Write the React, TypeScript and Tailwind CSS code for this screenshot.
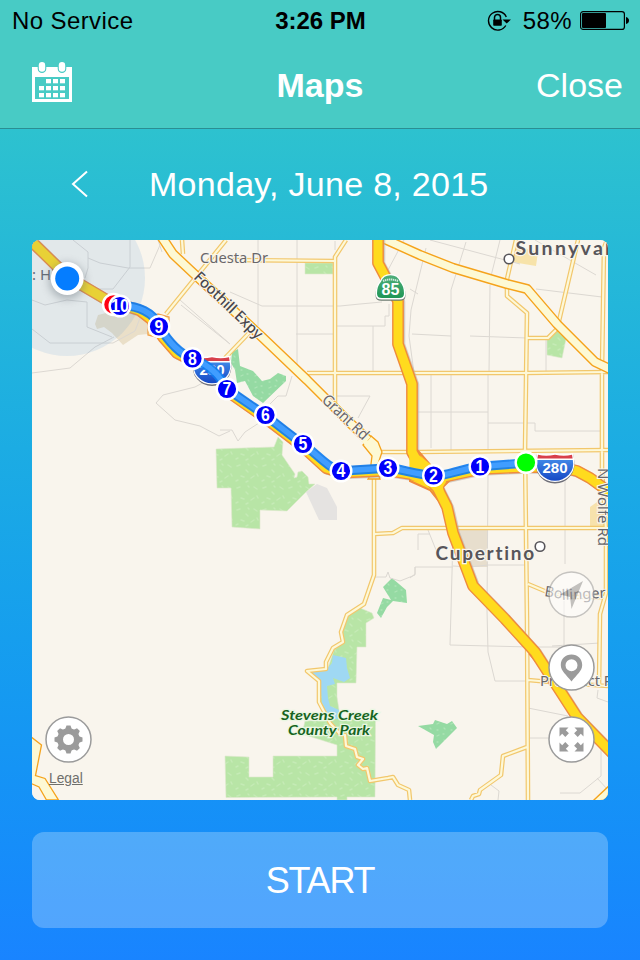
import type { ReactNode } from "react";

// All map geometry shares one coordinate space, see the viewBox in <RouteMap />.
const STREETS = [
  "M258 240V326 M297 240V371 M335 241V250 M230 292L262 306L340 306L360 304L382 302",
  "M296 334H335 M337 326H385V316H389V304 M373 326V374 M404 240L388 270 M411 310L409 336L414 373",
  "M426 248L411 310 M410 289L418 294 M500 240L490 280 M430 240L520 264 M466 242L451 290V373",
  "M490 285L489 373 M412 334L451 336 M470 336L527 338 M546 340V373 M536 289L602 297",
  "M535 240L596 275 M431 375V448 M451 375V450 M418 412H488 M488 375V450 M488 423H535V431H602",
  "M565 473V564 M488 475L487 610L488 652L495 681H527 M451 500V525",
  "M453 536L451 610L450 645L530 647H565",
  "M418 550V534 M410 578L415 574V567H453 M564 600V645 M552 646L600 643 M528 708L568 716",
  "M530 738H552 M601 740V776L580 793H560 M597 778L608 790 M598 690L597 698L608 702",
  "M415 567V575L400 581L390 578L388 572L386 577H375 M180 300L230 344 M491 785L499 791L498 800",
  "M453 566L470 567L488 565H525 M428 530L440 560 M418 534H430",
  "M32 329L50 343H113L135 331L140 318 M32 300L45 305L67 300L87 302V327L112 337",
  "M32 373L70 368L95 347L114 337 M130 240V267L113 289H87 M73 240L88 252V268 M88 258L100 263L128 268H150L160 245",
  "M88 268L85 278 M225 371L195 387L163 395L156 403L175 420L200 426L219 436L230 431",
  "M220 430L232 430L238 441L245 432L262 421 M292 376L286 396H278L270 404 M330 396H370L358 418 M158 240L162 252",
  "M181 305L230 344",
];

const LOCAL_ROADS = [
  "M226 240L166 314 M182 240L183 254 M232 260L335 261",
  "M346 240L335 257V403 M307 373H525L608 372 M249 333L225 358",
  "M516 240L507 279V296L527 313L525 450L527 620L528 800",
  "M578 240L559 321L557 329L548 338H527 M607 240L604 248L602 369V470L606 530V593L600 614L599 686",
  "M380 452H412 M418 452L608 450 M375 534L393 533L402 528H608",
  "M528 584L547 592L570 597H605 M528 680L550 682L608 686",
  "M374 474V575L364 604L347 615L341 632L343 642L333 648L326 662L326 669L307 671L319 681V702L330 723L340 734L345 735L346 746L355 749L357 757L363 759L358 765L363 769L367 768L370 781L388 778L393 777L398 785L409 790L410 800",
  "M527 747L503 756L501 775L480 790L479 794L473 796L471 800",
];

const EXPRESSWAYS = [
  "M161 236L173 254L190 270L220 298L263 338L307 380L330 403L347 420L368 440",
  "M380 237L420 255L453 268L507 284L527 289L557 324L595 362L612 370",
  "M594 806L612 789",
];

const FREEWAYS = [
  "M28 238L68 277L107 300L140 310.500L151 319L163 337L177 353L193 361L218 373L227 391L264 417L302 446L326 468L341 472.500L388 470.500L410 474L434 479L480 469L525 467H560L577 471L590 478L612 494",
  "M378 236V263L387 280L398 301V344L412 384V452L425 475L437 487L447 507L453 533L473 586L505 619L535 652L577 717L614 755",
];

const PARKS = [
  "M305 263H333V274H305Z",
  "M547 336L557 331L566 339L562 358L547 355Z",
  "M216 449L274 447L278 437L283 442L282 455L295 474L294 478L297 477L298 472L302 471L308 477L309 484L315 484L306 492L287 511L260 510V529L232 527L231 488H217Z",
  "M360 608L372 613L374 618L366 623V647H357L356 683H337V697L339 710V719H375.500L375 797H347V800H337V797L226 797.500L225 756L249 757V777H273V756H337V745L302 734L305 721L328 720L320 700V680L328 668L334 650L344 642L342 630L348 616Z",
];

const GOLF = [
  "M232 352L238 349L240 366L253 371L262 381L270 379L278 373L286 376V381L263 403L253 396L245 381L237 383L235 370L231 363Z",
  "M392 578L406 590L407 603L393 601L387 607L381 618L377 613L383 598L391 600L383 587Z",
  "M418 726L433 724L435 720L447 724L452 721L457 728L436 749L433 742L434 735Z",
];

const ROUTE =
  "M526 463L480 466.500C455 470 450 476 434 475.500C415 475 400 468 388 468L341 471C328 468 318 455 303 444C290 435 278 425 265 415L227 389C220 376 211 366 192 358C180 354 168 341 159 326C154 313 138 305 120 306";

const MILES = [
  { n: 10, x: 120, y: 306 },
  { n: 9, x: 159, y: 326.5 },
  { n: 8, x: 192.5, y: 358.5 },
  { n: 7, x: 227, y: 389 },
  { n: 6, x: 265.5, y: 415 },
  { n: 5, x: 303, y: 444 },
  { n: 4, x: 341, y: 471 },
  { n: 3, x: 388, y: 468 },
  { n: 2, x: 433.5, y: 475.5 },
  { n: 1, x: 480, y: 466.5 },
];

export default function App() {
  return (
    <div className="w-[640px] h-[960px] overflow-hidden flex flex-col bg-gradient-to-b from-[#35cac6] to-[#1984ff] font-['Liberation_Sans',Arial,sans-serif] text-white">
      <header className="h-[129px] shrink-0 bg-[#48cbc5] border-b border-[#2b8e93]">
        <StatusBar />
        <div className="grid grid-cols-3 items-center h-[86px] pl-8 pr-[17px]">
          <CalendarIcon />
          <h1 className="text-center text-[34px] font-bold leading-none -ml-[15px]">Maps</h1>
          <button className="text-right text-[34px] leading-none">Close</button>
        </div>
      </header>

      <div className="h-[109px] mb-0.5 shrink-0 flex items-center pl-[71px]">
        <svg width="17" height="28" viewBox="0 0 17 28" fill="none" stroke="white" strokeWidth="2">
          <path d="M16 1.500L2 14L16 26.500" />
        </svg>
        <p className="ml-[61px] text-[34px] leading-none tracking-[0.28px] whitespace-nowrap">Monday, June 8, 2015</p>
      </div>

      <main className="relative mx-8 h-[560px] shrink-0 rounded-lg overflow-hidden bg-[#f9f5ed]">
        <RouteMap />
        <RoundButton className="left-[12.5px] top-[476px]">
          <GearIcon />
        </RoundButton>
        <RoundButton className="right-[13px] top-[331px] opacity-55">
          <path d="M35 10L23.500 38L22 26L12 23.500Z" fill="#969696" />
        </RoundButton>
        <RoundButton className="right-[13px] top-[403.5px]">
          <path
            d="M23.500 10.500c-6.200 0-10.700 4.600-10.700 10.400 0 6 5.500 9.600 10.700 16.600 5.200-7 10.700-10.600 10.700-16.600 0-5.800-4.500-10.400-10.700-10.400zm0 4.700a6 6 0 1 1 0 12 6 6 0 0 1 0-12z"
            fill="#9b9b9b"
            fillRule="evenodd"
          />
        </RoundButton>
        <RoundButton className="right-[13px] top-[476px]">
          <ExpandIcon />
        </RoundButton>
        <a className="absolute left-[17px] top-[531px] text-[13.800px] leading-4 text-[#6f6f6c] underline">Legal</a>
      </main>

      <button className="mx-8 mt-8 h-24 pt-0.5 rounded-xl bg-white/25 text-[36px] leading-none">
        <span className="tracking-[-1.2px]">START</span>
      </button>
    </div>
  );
}

function StatusBar() {
  return (
    <div className="grid grid-cols-3 items-center h-[42px] pl-3 pr-[11px] text-black text-[24px] leading-none">
      <span className="tracking-[0.4px] whitespace-nowrap">No Service</span>
      <span className="text-center font-bold text-[24px]">3:26 PM</span>
      <div className="flex items-center justify-end">
        <svg width="24" height="22" viewBox="0 0 24 22" fill="none" stroke="black" className="-mt-px">
          <path d="M18.800 15.500A9.300 9.300 0 1 1 19.300 7" strokeWidth="1.400" />
          <path d="M15.500 9.500H24L19.700 13.500Z" fill="black" stroke="none" />
          <path d="M7.500 10V7.500a3 3 0 0 1 6 0V10" strokeWidth="1.500" />
          <rect x="6.200" y="9.500" width="8.600" height="6.200" rx="0.800" fill="black" stroke="none" />
        </svg>
        <span className="ml-[12px] tracking-[0.4px]">58%</span>
        <svg className="ml-2 -mt-0.5" width="49" height="20" viewBox="0 0 49 20">
          <rect x="0.600" y="1.600" width="43.800" height="17.800" rx="2.500" fill="none" stroke="black" strokeWidth="1.200" />
          <rect x="2" y="3" width="24" height="15" rx="1" />
          <path d="M46 7q3 1 3 3.500t-3 3.500z" />
        </svg>
      </div>
    </div>
  );
}

function CalendarIcon() {
  const cells = [
    [14, 17], [21, 17], [28, 17],
    [7, 24], [14, 24], [21, 24], [28, 24],
    [7, 31], [14, 31], [21, 31], [28, 31],
  ];
  return (
    <svg className="-mt-1.5" width="40" height="40" viewBox="0 0 40 40">
      <path d="M0 5H40V40H0ZM3 15V37H37V15Z" fill="white" fillRule="evenodd" />
      {[10, 30].map((x) => (
        <g key={x}>
          <rect x={x - 4.300} y="-1" width="8.600" height="12" rx="4.300" fill="#48cbc5" />
          <rect x={x - 3.200} y="0" width="6.400" height="9.800" rx="3.200" fill="white" />
        </g>
      ))}
      {cells.map(([x, y]) => (
        <rect key={`${x}-${y}`} x={x} y={y} width="5" height="4.300" fill="white" />
      ))}
    </svg>
  );
}

function RoundButton({ className, children }: { className: string; children: ReactNode }) {
  return (
    <button className={`absolute ${className}`}>
      <svg width="47" height="47" viewBox="0 0 47 47" className="block">
        <circle cx="23.500" cy="23.500" r="22.500" fill="white" stroke="#9b9b9b" strokeWidth="1.500" />
        {children}
      </svg>
    </button>
  );
}

function GearIcon() {
  return (
    <g transform="translate(23.500 23.500)">
      {[0, 45, 90, 135, 180, 225, 270, 315].map((a) => (
        <path key={a} d="M-3.800-9L-2-14H2L3.800-9Z" fill="#9b9b9b" transform={`rotate(${a})`} />
      ))}
      <circle r="8.400" fill="none" stroke="#9b9b9b" strokeWidth="5.800" />
    </g>
  );
}

function ExpandIcon() {
  return (
    <g transform="translate(23.500 23.500)" fill="#9b9b9b">
      {[0, 90, 180, 270].map((a) => (
        <path key={a} d="M-12-12H-3L-5.700-9.300L-2.600-6.200L-6.200-2.600L-9.300-5.700L-12-3Z" transform={`rotate(${a})`} />
      ))}
    </g>
  );
}

function Roads({ lines, casing, fill, outer, inner }: {
  lines: string[]; casing: string; fill: string; outer: number; inner: number;
}) {
  const d = lines.join(" ");
  return (
    <g fill="none" strokeLinejoin="round">
      <path d={d} stroke={casing} strokeWidth={outer} />
      <path d={d} stroke={fill} strokeWidth={inner} />
    </g>
  );
}

function RouteMap() {
  return (
    <svg className="block" width="576" height="560" viewBox="32 240 576 560">
      <defs>
        <pattern id="grass" width="26" height="22" patternUnits="userSpaceOnUse">
          <rect width="26" height="22" fill="#b8e5a6" />
          <path d="M3 4l3-1M12 8l2 2M20 3l3 2M7 14l3 1M17 16l3-2M23 12l1 2M2 19l2-1M12 20l2-1M14 2l1 1" stroke="#c5ebb6" strokeWidth="1.500" strokeLinecap="round" />
        </pattern>
        <pattern id="golf" width="14" height="12" patternUnits="userSpaceOnUse">
          <rect width="14" height="12" fill="#95daa3" />
          <path d="M3 4l2-1M10 8l1 1M9 2h1M3 10h1" stroke="#ade4b6" strokeWidth="1.300" strokeLinecap="round" />
        </pattern>
        <linearGradient id="interstate" x1="0" y1="0" x2="0" y2="1">
          <stop offset="0" stopColor="#3f86e6" />
          <stop offset="1" stopColor="#1447c4" />
        </linearGradient>
        <linearGradient id="stateRoute" x1="0" y1="0" x2="0" y2="1">
          <stop offset="0" stopColor="#4fae7a" />
          <stop offset="1" stopColor="#1f9656" />
        </linearGradient>
        <filter id="soft" x="-50%" y="-50%" width="200%" height="200%">
          <feGaussianBlur stdDeviation="4" />
        </filter>
      </defs>

      <rect x="32" y="240" width="576" height="560" fill="#f9f5ed" />

      {/* land use */}
      <path d="M98 315L95 324L97 329L104 327L112 333L123 345L138 335L148 334L148 322L140 317L118 310Z" fill="#eadfc8" />
      <path d="M517 246L538 252L536 266L512 262Z" fill="#f7e3aa" />
      <path d="M458 529H488V567H464Z" fill="#e7decd" />
      <path d="M590 507L597 502H604V527H590Z" fill="#f7e2ac" />
      <path d="M306 492L317 484L327 488L337 507V520H319Z" fill="#e5e3e1" />
      <path d={PARKS.join(" ")} fill="url(#grass)" stroke="#dde8cd" strokeWidth="0.600" />
      <path d={GOLF.join(" ")} fill="url(#golf)" />
      <path d="M333 655L346 658L347 668L350 678L344 682L333 678L335 684L327 686L328 698L330 706L339 710V719H330L322 703L320 682L310 672L326 670L332 663Z" fill="#9fd8f3" />

      <path d={STREETS.join(" ")} fill="none" stroke="#dcd8d2" strokeWidth="1" />

      <Roads lines={LOCAL_ROADS} casing="#f2c76c" fill="#fdf8d8" outer={4.600} inner={2.200} />
      <path d="M363 445L371 436L378 442L382 452L378 464V474L380 479H368L371 474V464L372 456Z" fill="#fdf9d4" stroke="#f5a31c" strokeWidth="1.300" />
      <path d="M30 736L41.500 745L35.500 775.500L45 778.500L58.500 800H46.500L39 787L30 783Z" fill="#fdf9d4" stroke="#f5a31c" strokeWidth="1.300" />
      <Roads lines={EXPRESSWAYS} casing="#f5a31c" fill="#fdf9d4" outer={10.200} inner={7.400} />
      <path d="M363 436L371 444L366 446L360 440Z" fill="#fdf9d4" />
      <path d="M148 318L158 314L169 317V324L160 338L148 335Z" fill="#fdeeb6" stroke="#f2a04b" strokeWidth="1.300" />
      <path d="M530 653L553 680" stroke="#ef8b3d" strokeWidth="4" />

      {/* freeways */}
      <path d={FREEWAYS.join(" ")} transform="translate(1.500 1)" fill="none" stroke="#b9b3aa" strokeWidth="11.500" strokeLinejoin="round" opacity="0.600" />
      <path d="M412 445L420 453L432 467L452 478L443 487L446 505L438 500L430 490L410 481Z" fill="#ffdb1e" stroke="#ef8b3d" strokeWidth="2" />
      <Roads lines={FREEWAYS} casing="#ef8b3d" fill="#ffdb1e" outer={11.800} inner={9} />
      <path d="M409 450L420 456L434 467L448 478L443 487L444 500L430 487L410 479Z" fill="#ffdb1e" />

      {/* place and street names */}
      <g fontFamily="'Noto Sans', sans-serif" fill="#69676a" stroke="#f9f5ed" strokeWidth="2" paintOrder="stroke">
        <text x="200" y="262.500" fontSize="14.500" textLength="68" lengthAdjust="spacingAndGlyphs">Cuesta Dr</text>
        <text x="32" y="280" fontSize="15" stroke="none">: Hills</text>
        <text transform="translate(193 278) rotate(44)" fontSize="15" fontWeight="500" fill="#48464a" textLength="89" lengthAdjust="spacingAndGlyphs">Foothill Expy</text>
        <text transform="translate(321 401) rotate(43.500)" fontSize="15.500" textLength="58" lengthAdjust="spacingAndGlyphs">Grant Rd</text>
        <text transform="translate(597.500 468) rotate(90)" fontSize="14.500" textLength="78" lengthAdjust="spacingAndGlyphs">N Wolfe Rd</text>
        <text transform="translate(544 596) rotate(9)" fontSize="14.500">Bo</text>
        <text transform="translate(562 600) rotate(-3)" fontSize="14.500" textLength="44" lengthAdjust="spacingAndGlyphs">llinger</text>
        <text x="540" y="686" fontSize="15" textLength="82" lengthAdjust="spacingAndGlyphs">Prospect Rd</text>
      </g>
      <g fontFamily="Lato, sans-serif" fontWeight="700" fill="#57555a" stroke="#f9f5ed" strokeWidth="2.500" paintOrder="stroke">
        <text x="515.500" y="255" fontSize="19.500" letterSpacing="2.300">Sunnyvale</text>
        <text x="435.500" y="560" fontSize="19" letterSpacing="1.750" style={{ fontVariantLigatures: "none" }}>Cupertino</text>
        <g fontStyle="italic" fontSize="14" fontWeight="700" fill="#17641f" stroke="#eaf7e2">
          <text x="281" y="719.500" textLength="97" lengthAdjust="spacingAndGlyphs">Stevens Creek</text>
          <text x="288" y="735" textLength="82" lengthAdjust="spacingAndGlyphs">County Park</text>
        </g>
      </g>
      <g fill="white" stroke="#57555a" strokeWidth="1.600">
        <circle cx="509" cy="259" r="4.800" />
        <circle cx="540" cy="546.500" r="4.800" />
      </g>

      <StateShield />
      <InterstateShield x={212} y={369} />
      <InterstateShield x={555} y={466.500} />

      {/* location accuracy */}
      <circle cx="67" cy="278" r="78" fill="#4a94d8" opacity="0.130" />

      {/* tracked route */}
      <g fill="none" strokeLinecap="round" strokeLinejoin="round">
        <path d={ROUTE} stroke="#0f7cf0" strokeWidth="9.400" opacity="0.920" />
        <path d={ROUTE} stroke="#409dff" strokeWidth="5.500" />
      </g>

      <circle cx="113.500" cy="304.500" r="10.500" fill="#ff0012" stroke="white" strokeWidth="2.500" />
      {MILES.map((m) => (
        <g key={m.n}>
          <circle cx={m.x} cy={m.y} r="10.300" fill="#0000fa" stroke="white" strokeWidth="2.400" />
          <text
            x={m.x}
            y={m.y + 6.3}
            fontFamily="'Liberation Sans', Arial, sans-serif"
            fontSize="18"
            fontWeight="700"
            fill="white"
            textAnchor="middle"
            textLength={m.n > 9 ? 18 : 8.8}
            lengthAdjust="spacingAndGlyphs"
          >
            {m.n}
          </text>
        </g>
      ))}
      <circle cx="526" cy="462.500" r="10.300" fill="#00ff00" stroke="white" strokeWidth="2.400" />

      <circle cx="67" cy="281" r="18" fill="#56616b" opacity="0.400" filter="url(#soft)" />
      <circle cx="67.200" cy="278.500" r="16.500" fill="white" />
      <circle cx="67.200" cy="278.500" r="12" fill="#057dff" />
    </svg>
  );
}

function InterstateShield({ x, y }: { x: number; y: number }) {
  return (
    <g transform={`translate(${x} ${y})`}>
      <path d="M-18-13.500Q-9-11 0-13.500Q9-11 18-13.500Q22 1 15 9Q9 16 0 16Q-9 16-15 9Q-22 1-18-13.500Z" fill="#6f6f78" transform="translate(0 1)" />
      <path d="M-18-13.500Q-9-11 0-13.500Q9-11 18-13.500Q22 1 15 9Q9 15.500 0 15.500Q-9 15.500-15 9Q-22 1-18-13.500Z" fill="white" />
      <path d="M-17.800-6.500H17.800Q19.500 2 14 8Q8 14.300 0 14.300Q-8 14.300-14 8Q-19.500 2-17.800-6.500Z" fill="url(#interstate)" />
      <path d="M-17-11.800Q-9-9.800 0-11.800Q9-9.800 17-11.800L17.600-8H-17.600Z" fill="#d8404b" />
      <text y="6" fontFamily="'Liberation Sans', Arial, sans-serif" fontSize="15" fontWeight="700" fill="white" textAnchor="middle">
        280
      </text>
    </g>
  );
}

function StateShield() {
  return (
    <g transform="translate(390.500 288)">
      <path d="M0-14Q8-14 10.500-7Q15-2 15 6Q15 11.500 9 11.500H-9Q-15 11.500-15 6Q-15-2-10.500-7Q-8-14 0-14Z" fill="#6b7a70" transform="translate(0 1.300)" />
      <path d="M0-14Q8-14 10.500-7Q15-2 15 6Q15 11.500 9 11.500H-9Q-15 11.500-15 6Q-15-2-10.500-7Q-8-14 0-14Z" fill="white" />
      <path d="M0-12.700Q7-12.700 9.500-6.300Q13.500-2 13.500 5.500Q13.500 10 8.500 10H-8.500Q-13.500 10-13.500 5.500Q-13.500-2-9.500-6.300Q-7-12.700 0-12.700Z" fill="url(#stateRoute)" />
      <path d="M-7.500-7Q0-10 7.500-7" fill="none" stroke="white" strokeWidth="2" strokeDasharray="1.400 0.600" opacity="0.750" />
      <text y="7.300" fontFamily="'Liberation Sans', Arial, sans-serif" fontSize="16" fontWeight="700" fill="white" textAnchor="middle">
        85
      </text>
    </g>
  );
}
